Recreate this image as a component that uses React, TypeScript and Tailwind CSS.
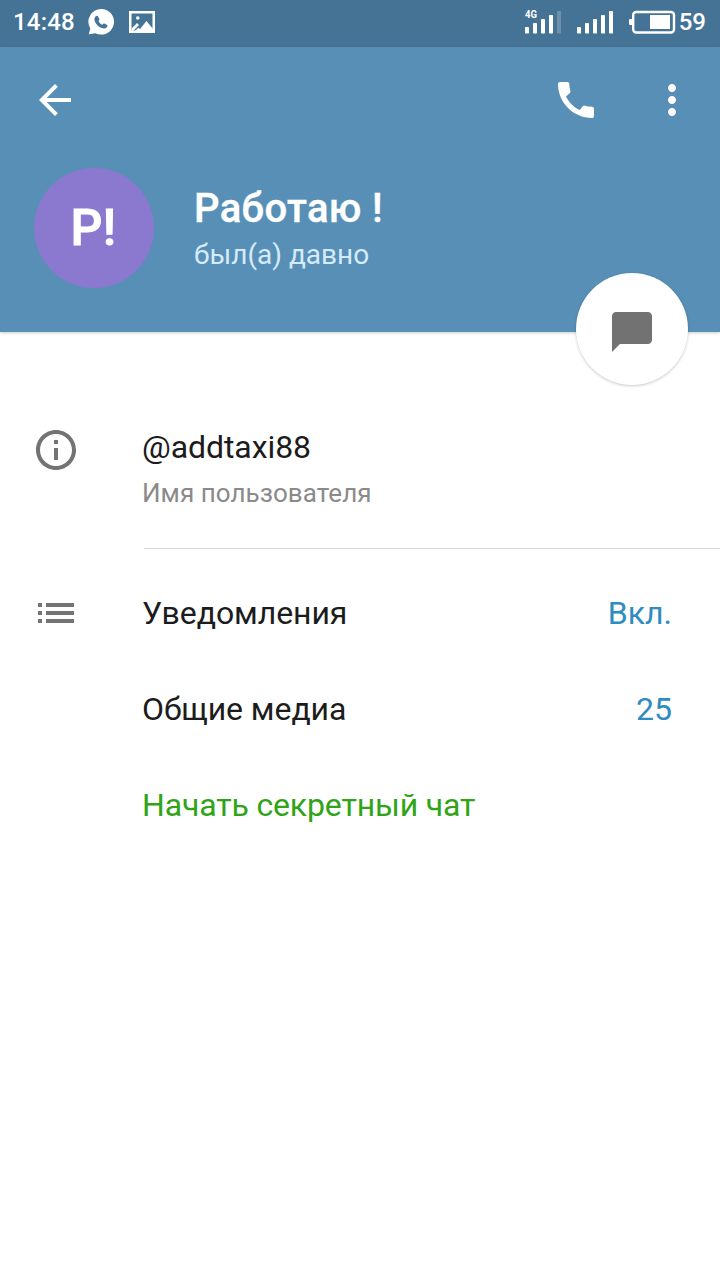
import React from "react";
import { MdArrowBack, MdCall, MdMoreVert, MdChatBubble, MdInfoOutline, MdList } from "react-icons/md";

function SignalBars({ label, weak }: { label?: string; weak?: boolean }) {
  return (
    <svg width="36" height="26" viewBox="0 0 36 26" fill="white">
      {label && (
        <text x="0" y="9" fontSize="10" fontWeight="700" fontFamily="Roboto, sans-serif" textLength="12" lengthAdjust="spacingAndGlyphs">
          {label}
        </text>
      )}
      <rect x="0" y="18" width="4" height="6.5" rx="0.8" />
      <rect x="8" y="14" width="4" height="10.5" rx="0.8" />
      <rect x="16" y="10" width="4" height="14.5" rx="0.8" />
      <rect x="24" y="6" width="4" height="18.5" rx="0.8" />
      <rect x="32" y="2" width="4" height="22.5" rx="0.8" opacity={weak ? 0.22 : 1} />
    </svg>
  );
}

function WhatsAppIcon() {
  return (
    <svg width="26" height="26" viewBox="0 0 26 26">
      <path d="M13.2 0a12.8 12.8 0 1 1-5.8 24.2L.8 25.2l1.5-5.8A12.8 12.8 0 0 1 13.2 0z" fill="white" />
      <path
        d="M7.5 7.6c.8-.9 1.9-1.2 2.5-.2l1.4 2.5c.3.6-.2 1.2-1 2 1 1.900 2.100 3 3.900 3.800.9-1.100 1.400-1.500 2-1.200l2.800 1.500c.7.4.3 1.600-.3 2.200-1.300 1.300-2.900 1.600-5 .8-3.400-1.300-6-3.900-7.100-7.100-.5-1.700-.2-3.200.8-4.300z"
        fill="#457396"
      />
    </svg>
  );
}

function PictureIcon() {
  return (
    <svg width="26" height="22" viewBox="0 0 26 22">
      <path d="M1.25 1.25h23.5v19.5H1.25z" fill="none" stroke="white" strokeWidth="2.5" />
      <path d="M2.500 17.500l5.500-5.500 2 2-5.500 5.700h-2zM6 20l3.200-3.200 1.800 1.300 6.500-8 6.500 8v2z" fill="white" />
      <circle cx="8.8" cy="7" r="1.8" fill="white" />
    </svg>
  );
}

function BatteryIcon() {
  return (
    <svg width="47" height="24" viewBox="0 0 47 24">
      <rect x="0" y="9" width="4" height="6" rx="1" fill="white" />
      <rect x="4.2" y="2" width="40.8" height="20.5" rx="3" fill="none" stroke="white" strokeWidth="2.4" />
      <rect x="21" y="5" width="20" height="14" fill="white" />
    </svg>
  );
}

function StatusBar() {
  return (
    <div className="flex h-[47px] items-start justify-between bg-[#457396] pr-[14px] pl-[13px] text-2xl leading-none font-medium text-white">
      <div className="flex h-[43px] items-center">
        <span className="w-[75px] tracking-[0.2px]">14:48</span>
        <WhatsAppIcon />
        <span className="ml-[15px]">
          <PictureIcon />
        </span>
      </div>
      <div className="flex h-[43px] items-center">
        <SignalBars label="4G" weak />
        <span className="ml-4">
          <SignalBars />
        </span>
        <span className="ml-4">
          <BatteryIcon />
        </span>
        <span className="ml-[3px]">59</span>
      </div>
    </div>
  );
}

function Header() {
  return (
    <header className="relative h-[285px] bg-[#588fb6] text-white shadow-[0_1px_3px_rgba(0,0,0,0.2)]">
      <div className="flex items-center pt-[29px] pr-6 pl-[31px]">
        <button type="button" aria-label="Назад">
          <MdArrowBack size={48} />
        </button>
        <button type="button" className="ml-auto" aria-label="Позвонить">
          <MdCall size={48} />
        </button>
        <button type="button" className="ml-12" aria-label="Меню">
          <MdMoreVert size={48} />
        </button>
      </div>
      <div className="mt-11 flex items-center pl-[34px]">
        <div className="flex size-[120px] items-center justify-center rounded-full bg-[#8b78cf] pr-px text-[50px] font-medium tracking-[0.5px] [-webkit-text-stroke:1px_white]">
          Р!
        </div>
        <div className="ml-10 pt-1">
          <h1 className="text-[40px] leading-[50px] font-medium tracking-[0.35px] [-webkit-text-stroke:0.4px_white]">Работаю !</h1>
          <p className="text-[28px] leading-[42px] text-[#d5ebfa]">был(а) давно</p>
        </div>
      </div>
      <button
        type="button"
        aria-label="Сообщение"
        className="absolute right-8 -bottom-[53px] flex size-[112px] items-center justify-center rounded-full bg-white pt-[6px] text-[#727272] shadow-[0_1px_3px_rgba(0,0,0,0.22)]"
      >
        <MdChatBubble size={48} />
      </button>
    </header>
  );
}

type RowProps = {
  title: string;
  value?: string;
  icon?: React.ReactNode;
  className?: string;
};

function Row({ title, value, icon, className = "tracking-[-0.08px] text-[#1c1c1c]" }: RowProps) {
  return (
    <div className="flex h-24 items-center pr-12 pl-8 text-[32px]">
      <div className="w-[110px] shrink-0 text-[#737373]">{icon}</div>
      <span className={className}>{title}</span>
      {value && <span className="ml-auto text-[#2f8bc0]">{value}</span>}
    </div>
  );
}

export default function App() {
  return (
    <div className="h-[1280px] w-[720px] overflow-hidden bg-white font-['Roboto',sans-serif]">
      <StatusBar />
      <Header />
      <main>
        <div className="flex h-[216px] items-start pt-[94px] pl-8">
          <div className="w-[110px] shrink-0 text-[#737373]">
            <MdInfoOutline size={48} />
          </div>
          <div>
            <p className="text-[32px] leading-[42px] tracking-[-0.08px] text-[#1c1c1c]">@addtaxi88</p>
            <p className="mt-[5px] text-[26px] leading-[40px] tracking-[0.05px] text-[#8a8a8a]">Имя пользователя</p>
          </div>
        </div>
        <div className="ml-36 h-px bg-[#d8d8d8]" />
        <div className="pt-4">
          <Row title="Уведомления" value="Вкл." icon={<MdList size={48} />} />
          <Row title="Общие медиа" value="25" />
          <Row title="Начать секретный чат" className="tracking-[-0.15px] text-[#2fa416]" />
        </div>
      </main>
    </div>
  );
}
